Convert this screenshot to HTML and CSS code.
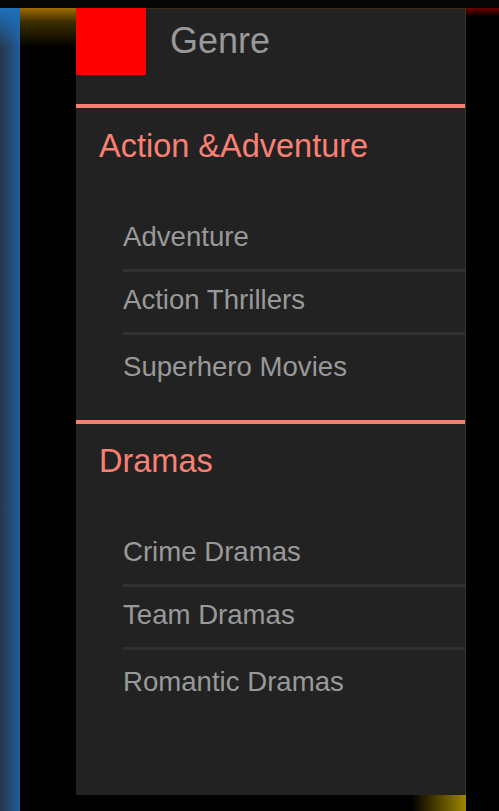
FILE: index.html
```html
<!DOCTYPE html>
<html lang="en">
<head>
    <meta charset="UTF-8">
    <meta name="viewport" content="width=device-width, initial-scale=1.0">
    <title>Genre</title>
    <link rel="stylesheet" href="styles.css">
</head>
<body>
    <div class="topbar"></div>
    <div class="page">
        <div class="rail"></div>
        <div class="gutter"></div>
        <div class="column">
            <nav class="panel">
                <header class="panel-head">
                    <div class="logo"></div>
                    <h1 class="title">Genre</h1>
                </header>
                <section class="group">
                    <h2 class="group-title">Action &amp;Adventure</h2>
                    <ul class="group-list">
                        <li>Adventure</li>
                        <li>Action Thrillers</li>
                        <li>Superhero Movies</li>
                    </ul>
                </section>
                <section class="group">
                    <h2 class="group-title">Dramas</h2>
                    <ul class="group-list">
                        <li>Crime Dramas</li>
                        <li>Team Dramas</li>
                        <li>Romantic Dramas</li>
                    </ul>
                </section>
            </nav>
            <div class="foot"></div>
        </div>
        <div class="side"></div>
    </div>
</body>
</html>
```

FILE: styles.css
```css
* { margin: 0; padding: 0; box-sizing: border-box; }
body { background: #000; font-family: "Liberation Sans", Arial, sans-serif; overflow: hidden; }
.topbar { height: 8px; background: #070707; }
.page { display: flex; height: 803px; }
.rail { width: 20px; background: linear-gradient(rgba(30, 112, 188, 1), rgba(30, 112, 188, 0) 40px), linear-gradient(to right, #263748, #1f5c9c); }
.gutter { width: 56px; background: linear-gradient(#a06c00, #3c2d00 14px, #000 40px); }
.column { width: 390px; display: flex; flex-direction: column; }
.panel { flex: 1; background: #222; border-top: 1px solid #3b2d17; border-right: 1px solid #38321f; }
.foot { height: 16px; background: linear-gradient(to right, #000 86%, #a08800); }
.side { flex: 1; background: linear-gradient(#6e0000, #000 9px); }

.panel-head { display: flex; align-items: flex-start; gap: 24px; height: 95px; }
.logo { width: 70px; height: 67px; margin-top: -1px; background: #f00; flex-shrink: 0; }
.title { font-size: 36px; font-weight: normal; line-height: 40px; color: #999; padding-top: 12px; }

.group { border-top: 4px solid #fa8072; padding: 18px 0 21px; }
.group-title { font-size: 32.5px; font-weight: normal; line-height: 40px; color: #fa8072; padding-left: 23px; }
.group:last-child .group-title { margin-top: -1px; margin-bottom: 1px; }
.group-list { list-style: none; margin: 43px 0 0 47px; }
.group-list li { font-size: 27.6px; line-height: 32px; color: #999; padding: 12px 0 16px; border-bottom: 3px solid #303030; }
.group-list li:last-child { border-bottom: none; padding-top: 16px; }
```
